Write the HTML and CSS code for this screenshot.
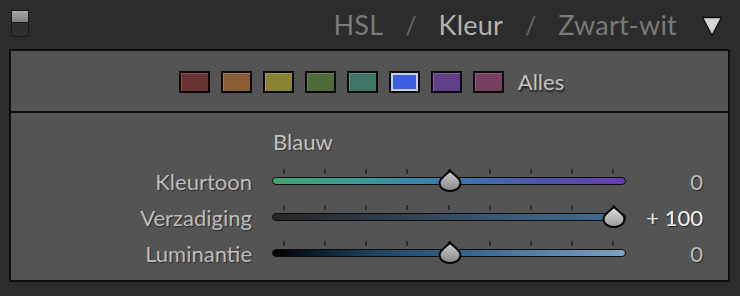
FILE: index.html
```html
<!DOCTYPE html>
<html>
<head>
<meta charset="utf-8">
<link rel="stylesheet" href="styles.css">
</head>
<body>
<div class="app">
  <header class="header">
    <div class="toggle"><span class="toggle-top"></span><span class="toggle-bottom"></span></div>
    <nav class="tabs">
      <span class="tab">HSL</span>
      <span class="sep">/</span>
      <span class="tab active">Kleur</span>
      <span class="sep">/</span>
      <span class="tab">Zwart-wit</span>
      <svg class="caret" width="22" height="22" viewBox="0 0 22 22"><path d="M1.5 2.5 H20.5 L11 20.5 Z" fill="#d4d4d4" stroke="#111" stroke-width="1.5" stroke-linejoin="round"/></svg>
    </nav>
  </header>
  <section class="panel">
    <div class="swatches">
      <span class="swatch red"></span>
      <span class="swatch orange"></span>
      <span class="swatch yellow"></span>
      <span class="swatch green"></span>
      <span class="swatch aqua"></span>
      <span class="swatch blue selected"></span>
      <span class="swatch purple"></span>
      <span class="swatch magenta"></span>
      <span class="all">Alles</span>
    </div>
    <div class="sliders">
      <div class="title">Blauw</div>
      <div class="row">
        <span class="label">Kleurtoon</span>
        <div class="slider">
          <div class="ticks"><i></i><i></i><i></i><i></i><i></i><i></i><i></i><i></i><i></i></div>
          <div class="track hue"></div>
          <svg class="thumb" style="left:178px" width="24" height="23" viewBox="0 0 24 23"><defs><linearGradient id="g1" x1="0" y1="0" x2="0" y2="1"><stop offset="0" stop-color="#d0d0d0"/><stop offset="1" stop-color="#858585"/></linearGradient></defs><path d="M12,1.5 C13.5,4.5 22.5,8.5 22.5,14 C22.5,19 17.5,22 12,22 C6.5,22 1.5,19 1.5,14 C1.5,8.5 10.5,4.5 12,1.5 Z" fill="url(#g1)" stroke="#050505" stroke-width="2"/></svg>
        </div>
        <span class="value">0</span>
      </div>
      <div class="row">
        <span class="label">Verzadiging</span>
        <div class="slider">
          <div class="ticks"><i></i><i></i><i></i><i></i><i></i><i></i><i></i><i></i><i></i></div>
          <div class="track sat"></div>
          <svg class="thumb" style="left:342px" width="24" height="23" viewBox="0 0 24 23"><defs><linearGradient id="g2" x1="0" y1="0" x2="0" y2="1"><stop offset="0" stop-color="#e2e2e2"/><stop offset="1" stop-color="#9a9a9a"/></linearGradient></defs><path d="M12,1.5 C13.5,4.5 22.5,8.5 22.5,14 C22.5,19 17.5,22 12,22 C6.5,22 1.5,19 1.5,14 C1.5,8.5 10.5,4.5 12,1.5 Z" fill="url(#g2)" stroke="#050505" stroke-width="2"/></svg>
        </div>
        <span class="value bright">+ 100</span>
      </div>
      <div class="row">
        <span class="label">Luminantie</span>
        <div class="slider">
          <div class="ticks"><i></i><i></i><i></i><i></i><i></i><i></i><i></i><i></i><i></i></div>
          <div class="track lum"></div>
          <svg class="thumb" style="left:178px" width="24" height="23" viewBox="0 0 24 23"><path d="M12,1.5 C13.5,4.5 22.5,8.5 22.5,14 C22.5,19 17.5,22 12,22 C6.5,22 1.5,19 1.5,14 C1.5,8.5 10.5,4.5 12,1.5 Z" fill="url(#g1)" stroke="#050505" stroke-width="2"/></svg>
        </div>
        <span class="value">0</span>
      </div>
    </div>
  </section>
</div>
</body>
</html>
```

FILE: styles.css
```css
* { box-sizing: border-box; }
html, body { margin: 0; padding: 0; }
body {
  width: 740px;
  height: 296px;
  overflow: hidden;
  background: #2c2c2c;
  font-family: Lato, "Open Sans", sans-serif;
}
.app { width: 740px; height: 296px; }

.header {
  height: 49px;
  display: flex;
  align-items: center;
  justify-content: space-between;
  padding: 0 17px 0 11px;
}
.toggle {
  width: 18px;
  height: 27px;
  display: flex;
  flex-direction: column;
  border: 1px solid #1a1a1a;
  background: #1f1f1f;
  align-self: flex-start;
  margin-top: 10px;
}
.toggle-top {
  height: 11px;
  background: linear-gradient(#a8a8a8, #7c7c7c);
}
.toggle-bottom {
  flex: 1;
  background: #2e2e2e;
  border-top: 1px solid #1e1e1e;
}
.tabs {
  display: flex;
  align-items: center;
  gap: 0;
  font-size: 27px;
  color: #7a7a7a;
}
.tab { letter-spacing: 0.2px; }
.tab.active { color: #b2b2b2; }
.sep { color: #666; margin: 0 22px; font-size: 25px; }
.caret { margin-left: 24px; margin-top: 2px; }

.panel {
  margin: 0 10px 0 9px;
  height: 233px;
  border: 2px solid #0e0e0e;
  background: #545454;
  display: flex;
  flex-direction: column;
}
.swatches {
  height: 62px;
  border-bottom: 2px solid #0e0e0e;
  display: flex;
  align-items: center;
  justify-content: center;
  gap: 11px;
  padding-left: 4px;
  padding-top: 1px;
}
.swatch {
  width: 31px;
  height: 22px;
  border: 2px solid #0a0a0a;
  box-shadow: inset 1px 1px 0 rgba(255,255,255,0.18);
}
.red { background: #6b3434; }
.orange { background: #8a5f36; }
.yellow { background: #888335; }
.green { background: #4e6a37; }
.aqua { background: #3f7667; }
.blue { background: #3a5ee0; }
.selected { box-shadow: inset 0 0 0 2px #c8cfdc; }
.purple { background: #623f89; }
.magenta { background: #784060; }
.all {
  margin-left: 3px;
  font-size: 22px;
  color: #c4c4c4;
  text-shadow: 1px 2px 2px #1c1c1c;
}

.sliders {
  flex: 1;
  padding-top: 16px;
}
.title {
  margin-left: 262px;
  font-size: 22px;
  line-height: 26px;
  color: #c2c2c2;
  text-shadow: 1px 1px 1px #333;
  margin-bottom: 8px;
}
.row {
  display: grid;
  grid-template-columns: 241px 354px 57px;
  column-gap: 20px;
  height: 36px;
  align-items: center;
}
.label {
  text-align: right;
  font-size: 22px;
  color: #bdbdbd;
  text-shadow: 1px 1px 1px #2a2a2a;
}
.value {
  text-align: right;
  font-size: 22px;
  color: #bdbdbd;
  text-shadow: 1px 1px 1px #2a2a2a;
}
.value.bright { color: #f2f2f2; }

.slider {
  position: relative;
  height: 36px;
}
.ticks {
  position: absolute;
  left: 11px;
  right: 12px;
  top: 6px;
  height: 5px;
  display: flex;
  justify-content: space-between;
}
.ticks i {
  display: block;
  width: 2px;
  height: 5px;
  background: #2e2e2e;
}
.track {
  position: absolute;
  left: 0;
  right: 0;
  top: 14px;
  height: 8px;
  border: 1.5px solid #0c0c0c;
  border-radius: 4px;
}
.hue { background: linear-gradient(90deg, #3fa66f 0%, #3a9c9a 25%, #3f79b0 50%, #4a57a8 75%, #6a3cb2 100%); }
.sat { background: linear-gradient(90deg, #262626 0%, #2e3b48 30%, #3a6283 75%, #3d6c92 100%); }
.lum { background: linear-gradient(90deg, #000000 0%, #1f4664 30%, #34658e 55%, #7ea3c3 100%); }
.thumb {
  position: absolute;
  top: 6px;
  margin-left: -12px;
}
```
